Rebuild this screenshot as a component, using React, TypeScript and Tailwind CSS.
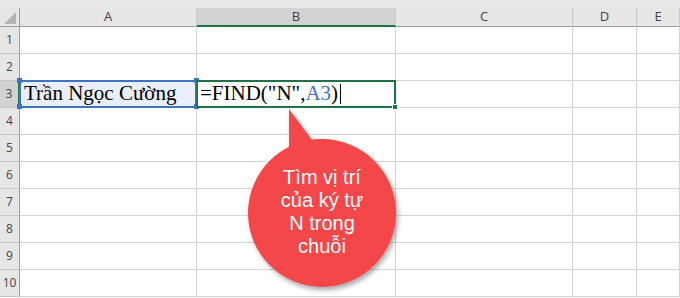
const cols = [
  { name: "A", w: "w-[177px]" },
  { name: "B", w: "w-[199px]" },
  { name: "C", w: "w-[177px]" },
  { name: "D", w: "w-[64px]" },
  { name: "E", w: "w-[43px]" },
];
const rows = [1, 2, 3, 4, 5, 6, 7, 8, 9, 10];

function Callout() {
  return (
    <div className="absolute left-[240px] top-[104px] h-[194px] w-[170px]">
      <svg width="170" height="194" viewBox="0 0 170 194" className="absolute left-0 top-0">
        <defs>
          <filter id="sh" x="-20%" y="-20%" width="140%" height="140%">
            <feDropShadow dx="2" dy="3" stdDeviation="2.5" floodColor="#000" floodOpacity="0.35" />
          </filter>
        </defs>
        <g filter="url(#sh)">
          <path d="M49 5 L49 50 L75 40 Z" fill="#f44648" />
          <circle cx="82" cy="109" r="74" fill="#f44648" />
        </g>
      </svg>
      <div className="absolute left-[7px] top-[62px] w-[150px] text-center font-['Liberation_Sans',Arial,sans-serif] text-[20px] leading-[23px] text-white">
        <div>Tìm vị trí</div>
        <div>của ký tự</div>
        <div>N trong</div>
        <div>chuỗi</div>
      </div>
    </div>
  );
}

function Handle({ pos, color }: { pos: string; color: string }) {
  return <span className={`absolute size-[5px] ${pos} ${color}`}></span>;
}

function Cell({ col, row }: { col: string; row: number }) {
  if (row === 3 && col === "A") {
    return (
      <div className="relative z-10 flex h-full items-center bg-[#e8effa] pl-[4px] font-['Liberation_Serif','Times_New_Roman',serif] text-[21px] text-black outline-2 -outline-offset-1 outline-[#3f73c8]">
        Trần Ngọc Cường
        <Handle pos="-left-[3px] -top-[3px]" color="bg-[#3f73c8]" />
        <Handle pos="-right-[3px] -top-[3px]" color="bg-[#3f73c8]" />
        <Handle pos="-bottom-[2px] -left-[3px]" color="bg-[#3f73c8]" />
        <Handle pos="-bottom-[2px] -right-[3px]" color="bg-[#3f73c8]" />
      </div>
    );
  }
  if (row === 3 && col === "B") {
    return (
      <div className="relative z-10 flex h-full items-center bg-white pl-[3px] font-['Liberation_Serif','Times_New_Roman',serif] text-[21px] text-black outline-2 -outline-offset-1 outline-[#217346]">
        <span>=FIND("N",</span>
        <span className="text-[#3f73c8]">A3</span>
        <span>)</span>
        <span className="ml-[2px] h-[20px] w-px bg-black"></span>
        <span className="absolute -bottom-[3px] -right-[3px] size-[6px] border border-white bg-[#217346]"></span>
      </div>
    );
  }
  return null;
}

export default function App() {
  return (
    <div className="relative flex h-[298px] w-[680px] flex-col overflow-hidden bg-white font-['Open_Sans','Liberation_Sans',sans-serif]">
      <div className="h-[8px] bg-[#e9e9e9]"></div>
      <div className="flex h-[19px]">
        <div className="relative h-full w-[20px] border-b border-r border-[#9e9e9e] bg-[#e6e6e6]">
          <svg width="12" height="12" className="absolute bottom-[2px] right-[3px]">
            <path d="M12 0 L12 12 L0 12 Z" fill="#b4b4b4" />
          </svg>
        </div>
        {cols.map((c) => (
          <div
            key={c.name}
            className={`${c.w} flex h-full items-center justify-center border-r text-[13px] text-[#444] ${
              c.name === "B"
                ? "border-b-2 border-r-[#c9c9c9] border-b-[#217346] bg-[#d2d2d2]"
                : "border-b border-r-[#c9c9c9] border-b-[#9e9e9e] bg-[#e6e6e6]"
            }`}
          >
            {c.name}
          </div>
        ))}
      </div>
      {rows.map((r) => (
        <div key={r} className="flex h-[27px]">
          <div
            className={`flex h-full w-[20px] items-center justify-center border-b border-[#c9c9c9] text-[12px] text-[#444] ${
              r === 3 ? "border-r-2 border-r-[#217346] bg-[#d2d2d2]" : "border-r border-r-[#9e9e9e] bg-[#e6e6e6]"
            }`}
          >
            {r}
          </div>
          {cols.map((c) => (
            <div key={c.name} className={`${c.w} h-full border-b border-r border-[#d4d4d4]`}>
              <Cell col={c.name} row={r} />
            </div>
          ))}
        </div>
      ))}
      <Callout />
    </div>
  );
}
